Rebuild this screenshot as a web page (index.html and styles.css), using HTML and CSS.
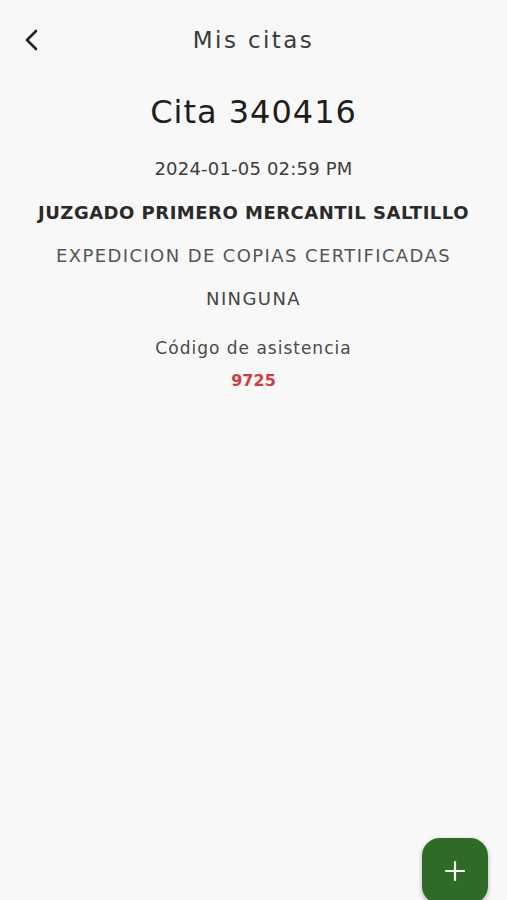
FILE: index.html
```html
<!DOCTYPE html>
<html lang="es">
<head>
<meta charset="utf-8">
<link rel="stylesheet" href="styles.css">
</head>
<body>
<div class="screen">
  <header class="topbar">
    <button class="back" aria-label="Atrás">
      <svg width="20" height="24" viewBox="0 0 20 24"><path d="M14 3 L5 12 L14 21" fill="none" stroke="#222" stroke-width="2.6" stroke-linecap="round" stroke-linejoin="round"/></svg>
    </button>
    <h1 class="title">Mis citas</h1>
  </header>
  <main class="detail">
    <h2 class="cita">Cita 340416</h2>
    <p class="date">2024-01-05 02:59 PM</p>
    <p class="court">JUZGADO PRIMERO MERCANTIL SALTILLO</p>
    <p class="service">EXPEDICION DE COPIAS CERTIFICADAS</p>
    <p class="note">NINGUNA</p>
    <p class="code-label">Código de asistencia</p>
    <p class="code">9725</p>
  </main>
  <button class="fab" aria-label="Agregar">
    <svg width="24" height="24" viewBox="0 0 24 24"><path d="M12 3 V21 M3 12 H21" stroke="#fff" stroke-width="2.2" stroke-linecap="round"/></svg>
  </button>
</div>
</body>
</html>
```
FILE: styles.css
```css
html, body {
  margin: 0;
  padding: 0;
  height: 100%;
  overflow: hidden;
  background: #f8f8f8;
}
body {
  font-family: "DejaVu Sans", "Noto Sans", sans-serif;
  color: #222;
}
.screen {
  position: relative;
  height: 900px;
}
.topbar {
  position: relative;
  display: flex;
  justify-content: center;
  align-items: center;
  height: 80px;
}
.back {
  position: absolute;
  left: 20px;
  top: 26px;
  border: 0;
  background: none;
  padding: 0;
  width: 24px;
  height: 28px;
  display: flex;
  align-items: center;
  justify-content: center;
}
.title {
  margin: 0;
  font-weight: 400;
  font-size: 23px;
  color: #3a3a3a;
  letter-spacing: 2.4px;
}
.detail {
  display: flex;
  flex-direction: column;
  align-items: center;
  text-align: center;
}
.detail p, .detail h2 { margin: 0; }
.cita {
  margin-top: 10px !important;
  font-size: 32px;
  font-weight: 500;
  color: #1e1e1e;
  line-height: 44px;
  letter-spacing: 1px;
}
.date {
  margin-top: 23px !important;
  font-size: 18px;
  color: #3c3c3c;
  line-height: 24px;
  letter-spacing: 0.2px;
}
.court {
  margin-top: 20px !important;
  font-size: 18px;
  font-weight: 700;
  color: #2a2a2a;
  line-height: 24px;
  letter-spacing: 0.5px;
}
.service {
  margin-top: 19px !important;
  font-size: 18px;
  color: #555;
  line-height: 24px;
  letter-spacing: 1.4px;
}
.note {
  margin-top: 19px !important;
  font-size: 18px;
  color: #444;
  line-height: 24px;
  letter-spacing: 1.4px;
}
.code-label {
  margin-top: 25px !important;
  font-size: 17px;
  color: #4a4a4a;
  line-height: 24px;
  letter-spacing: 1px;
}
.code {
  margin-top: 9px !important;
  font-size: 16px;
  font-weight: 700;
  color: #d63b3b;
  line-height: 24px;
}
.fab {
  position: absolute;
  left: 422px;
  top: 838px;
  width: 66px;
  height: 66px;
  border: 0;
  border-radius: 18px;
  background: #2d6b27;
  box-shadow: 0 2px 5px rgba(0,0,0,0.3);
  display: flex;
  align-items: center;
  justify-content: center;
  padding: 0;
}
```
